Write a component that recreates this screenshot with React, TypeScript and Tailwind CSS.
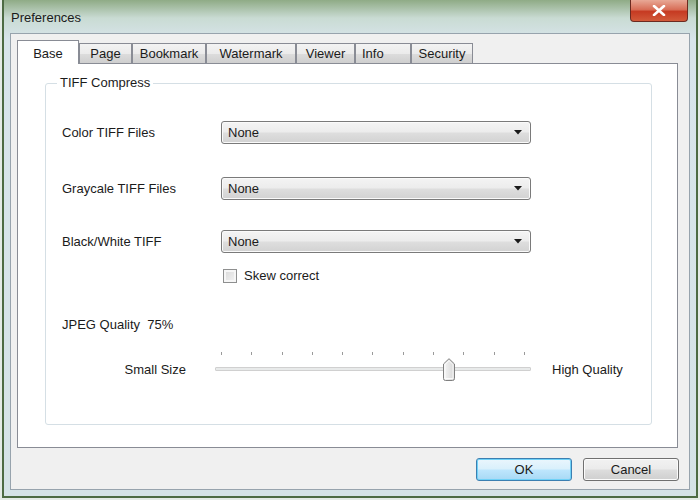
import React from 'react'

type Tab = { name: string; w: string; pad: string }

const tabs: Tab[] = [
  { name: 'Page', w: 'w-[53px]', pad: 'justify-center' },
  { name: 'Bookmark', w: 'w-[74px]', pad: 'justify-center' },
  { name: 'Watermark', w: 'w-[90px]', pad: 'justify-center' },
  { name: 'Viewer', w: 'w-[59px]', pad: 'justify-center' },
  { name: 'Info', w: 'w-[56px]', pad: 'justify-start pl-[6px]' },
  { name: 'Security', w: 'w-[62px]', pad: 'justify-center' },
]

function Combo() {
  return (
    <div className="flex h-[23px] w-[310px] items-center justify-between rounded-[3px] border border-[#7a7a7a] bg-[linear-gradient(180deg,#f4f4f4_0%,#ececec_48%,#dedede_52%,#d2d2d2_100%)] pl-[6px] pr-[8px] shadow-[inset_0_0_0_1px_#fafafa]">
      <span>None</span>
      <svg width="8" height="5" viewBox="0 0 8 5">
        <path d="M0 0 H8 L4 4.5 Z" fill="#1a1a1a" />
      </svg>
    </div>
  )
}

function Button({ label, primary }: { label: string; primary?: boolean }) {
  return (
    <button
      type="button"
      className={
        primary
          ? 'flex h-[23px] w-[96px] items-center justify-center rounded-[3px] border border-[#3c7fb1] bg-[linear-gradient(180deg,#eaf6fd_0%,#d9f0fc_48%,#bee6fd_52%,#a7d9f5_100%)] shadow-[inset_0_0_0_1px_#6fd1f7]'
          : 'flex h-[23px] w-[96px] items-center justify-center rounded-[3px] border border-[#707070] bg-[linear-gradient(180deg,#f2f2f2_0%,#ebebeb_48%,#dddddd_52%,#cfcfcf_100%)] shadow-[inset_0_0_0_1px_#fbfbfb]'
      }
    >
      {label}
    </button>
  )
}

function Slider() {
  const ticks = Array.from({ length: 11 }, (_, i) => i)
  return (
    <div className="relative ml-[29px] h-[30px] w-[316px]">
      <div className="flex h-[4px] justify-between px-[6px]">
        {ticks.map((t) => (
          <div key={t} className="h-[3px] w-[1px] bg-[#9a9a9a]" />
        ))}
      </div>
      <div className="mt-[11px] h-[4px] rounded-[1px] border border-[#d0d0d0] bg-[#e8eaea]" />
      <svg
        className="absolute left-[228px] top-[6px]"
        width="12"
        height="23"
        viewBox="0 0 12 23"
      >
        <defs>
          <linearGradient id="thumb" x1="0" y1="0" x2="1" y2="0">
            <stop offset="0" stopColor="#f6f6f6" />
            <stop offset="1" stopColor="#d6d6d6" />
          </linearGradient>
        </defs>
        <path
          d="M0.5 6 L6 0.7 L11.5 6 V20.5 Q11.5 22.5 9.5 22.5 H2.5 Q0.5 22.5 0.5 20.5 Z"
          fill="url(#thumb)"
          stroke="#7f7f7f"
        />
        <path d="M2 6.5 L6 2.7 L10 6.5 V20.5 H2 Z" fill="none" stroke="#ffffff" strokeWidth="0.8" />
      </svg>
    </div>
  )
}

export default function App() {
  return (
    <div
      className="h-[500px] w-[700px] overflow-hidden bg-[#e4ebe6] text-[13px] text-[#1b1b1b]"
      style={{ fontFamily: '"Liberation Sans", Arial, sans-serif' }}
    >
      <div className="ml-[2px] flex h-[498px] w-[696px] flex-col border-x-2 border-b-2 border-[#4d6b43] bg-[linear-gradient(180deg,#8fab86_0%,#c9dbd3_18px,#d8e5eb_40px,#d5e3e6_100%)] px-[6px]">
        <div className="flex h-[33px] shrink-0 items-start justify-between">
          <span className="mt-[8px] pl-[1px] text-[13px] text-[#1a1a1a]">Preferences</span>
          <div className="mr-[2px] flex h-[22px] w-[58px] items-center justify-center rounded-b-[4px] border border-t-0 border-[#6b2a20] bg-[linear-gradient(180deg,#e8a896_0%,#d86f58_45%,#c63a22_55%,#d25a3a_100%)]">
            <svg width="14" height="11" viewBox="0 0 14 11">
              <path d="M2 1 L12 10 M12 1 L2 10" stroke="#ffffff" strokeWidth="2.6" strokeLinecap="round" />
            </svg>
          </div>
        </div>

        <div className="flex h-[457px] flex-col border border-[#97a3ad] bg-[#f0f0f0] pl-[6px] pt-[6px]">
          <div className="flex h-[23px] items-end">
            <div className="relative z-10 -mb-[1px] flex h-[24px] w-[62px] items-start justify-center border border-b-0 border-[#898c95] bg-white pt-[3px]">
              Base
            </div>
            {tabs.map((t) => (
              <div
                key={t.name}
                className={`flex h-[20px] items-center border border-b-0 border-[#898c95] bg-[linear-gradient(180deg,#f3f3f3_0%,#ebebeb_50%,#dddddd_51%,#cfcfcf_100%)] ${t.w} ${t.pad}`}
              >
                {t.name}
              </div>
            ))}
          </div>

          <div className="h-[385px] w-[661px] border border-[#898c95] bg-white">
            <fieldset className="ml-[27px] mr-[25px] mt-[11px] h-[350px] rounded-[3px] border border-[#d5dfe5]">
              <legend className="ml-[11px] px-[3px] leading-[16px]">TIFF Compress</legend>
              <div className="flex flex-col pl-[16px]">
                <div className="mt-[30px] flex h-[23px] items-center">
                  <span className="w-[159px]">Color TIFF Files</span>
                  <Combo />
                </div>
                <div className="mt-[33px] flex h-[23px] items-center">
                  <span className="w-[159px]">Graycale TIFF Files</span>
                  <Combo />
                </div>
                <div className="mt-[30px] flex h-[23px] items-center">
                  <span className="w-[159px]">Black/White TIFF</span>
                  <Combo />
                </div>
                <div className="mt-[16px] flex h-[14px] items-center pl-[161px]">
                  <div className="h-[14px] w-[14px] border border-[#8e8f8f] bg-[linear-gradient(135deg,#d8d8d8_0%,#f4f4f4_100%)] shadow-[inset_0_0_0_2px_#f6f6f6]" />
                  <span className="ml-[7px]">Skew correct</span>
                </div>
                <div className="mt-[34px] h-[16px] leading-[16px]">JPEG Quality&nbsp;&nbsp;75%</div>
                <div className="mt-[19px] flex items-start">
                  <span className="mt-[10px] w-[124px] text-right leading-[16px]">Small Size</span>
                  <Slider />
                  <span className="ml-[21px] mt-[10px] leading-[16px]">High Quality</span>
                </div>
              </div>
            </fieldset>
          </div>

          <div className="mt-[10px] flex w-[662px] justify-end gap-[11px]">
            <Button label="OK" primary />
            <Button label="Cancel" />
          </div>
        </div>
      </div>
    </div>
  )
}
